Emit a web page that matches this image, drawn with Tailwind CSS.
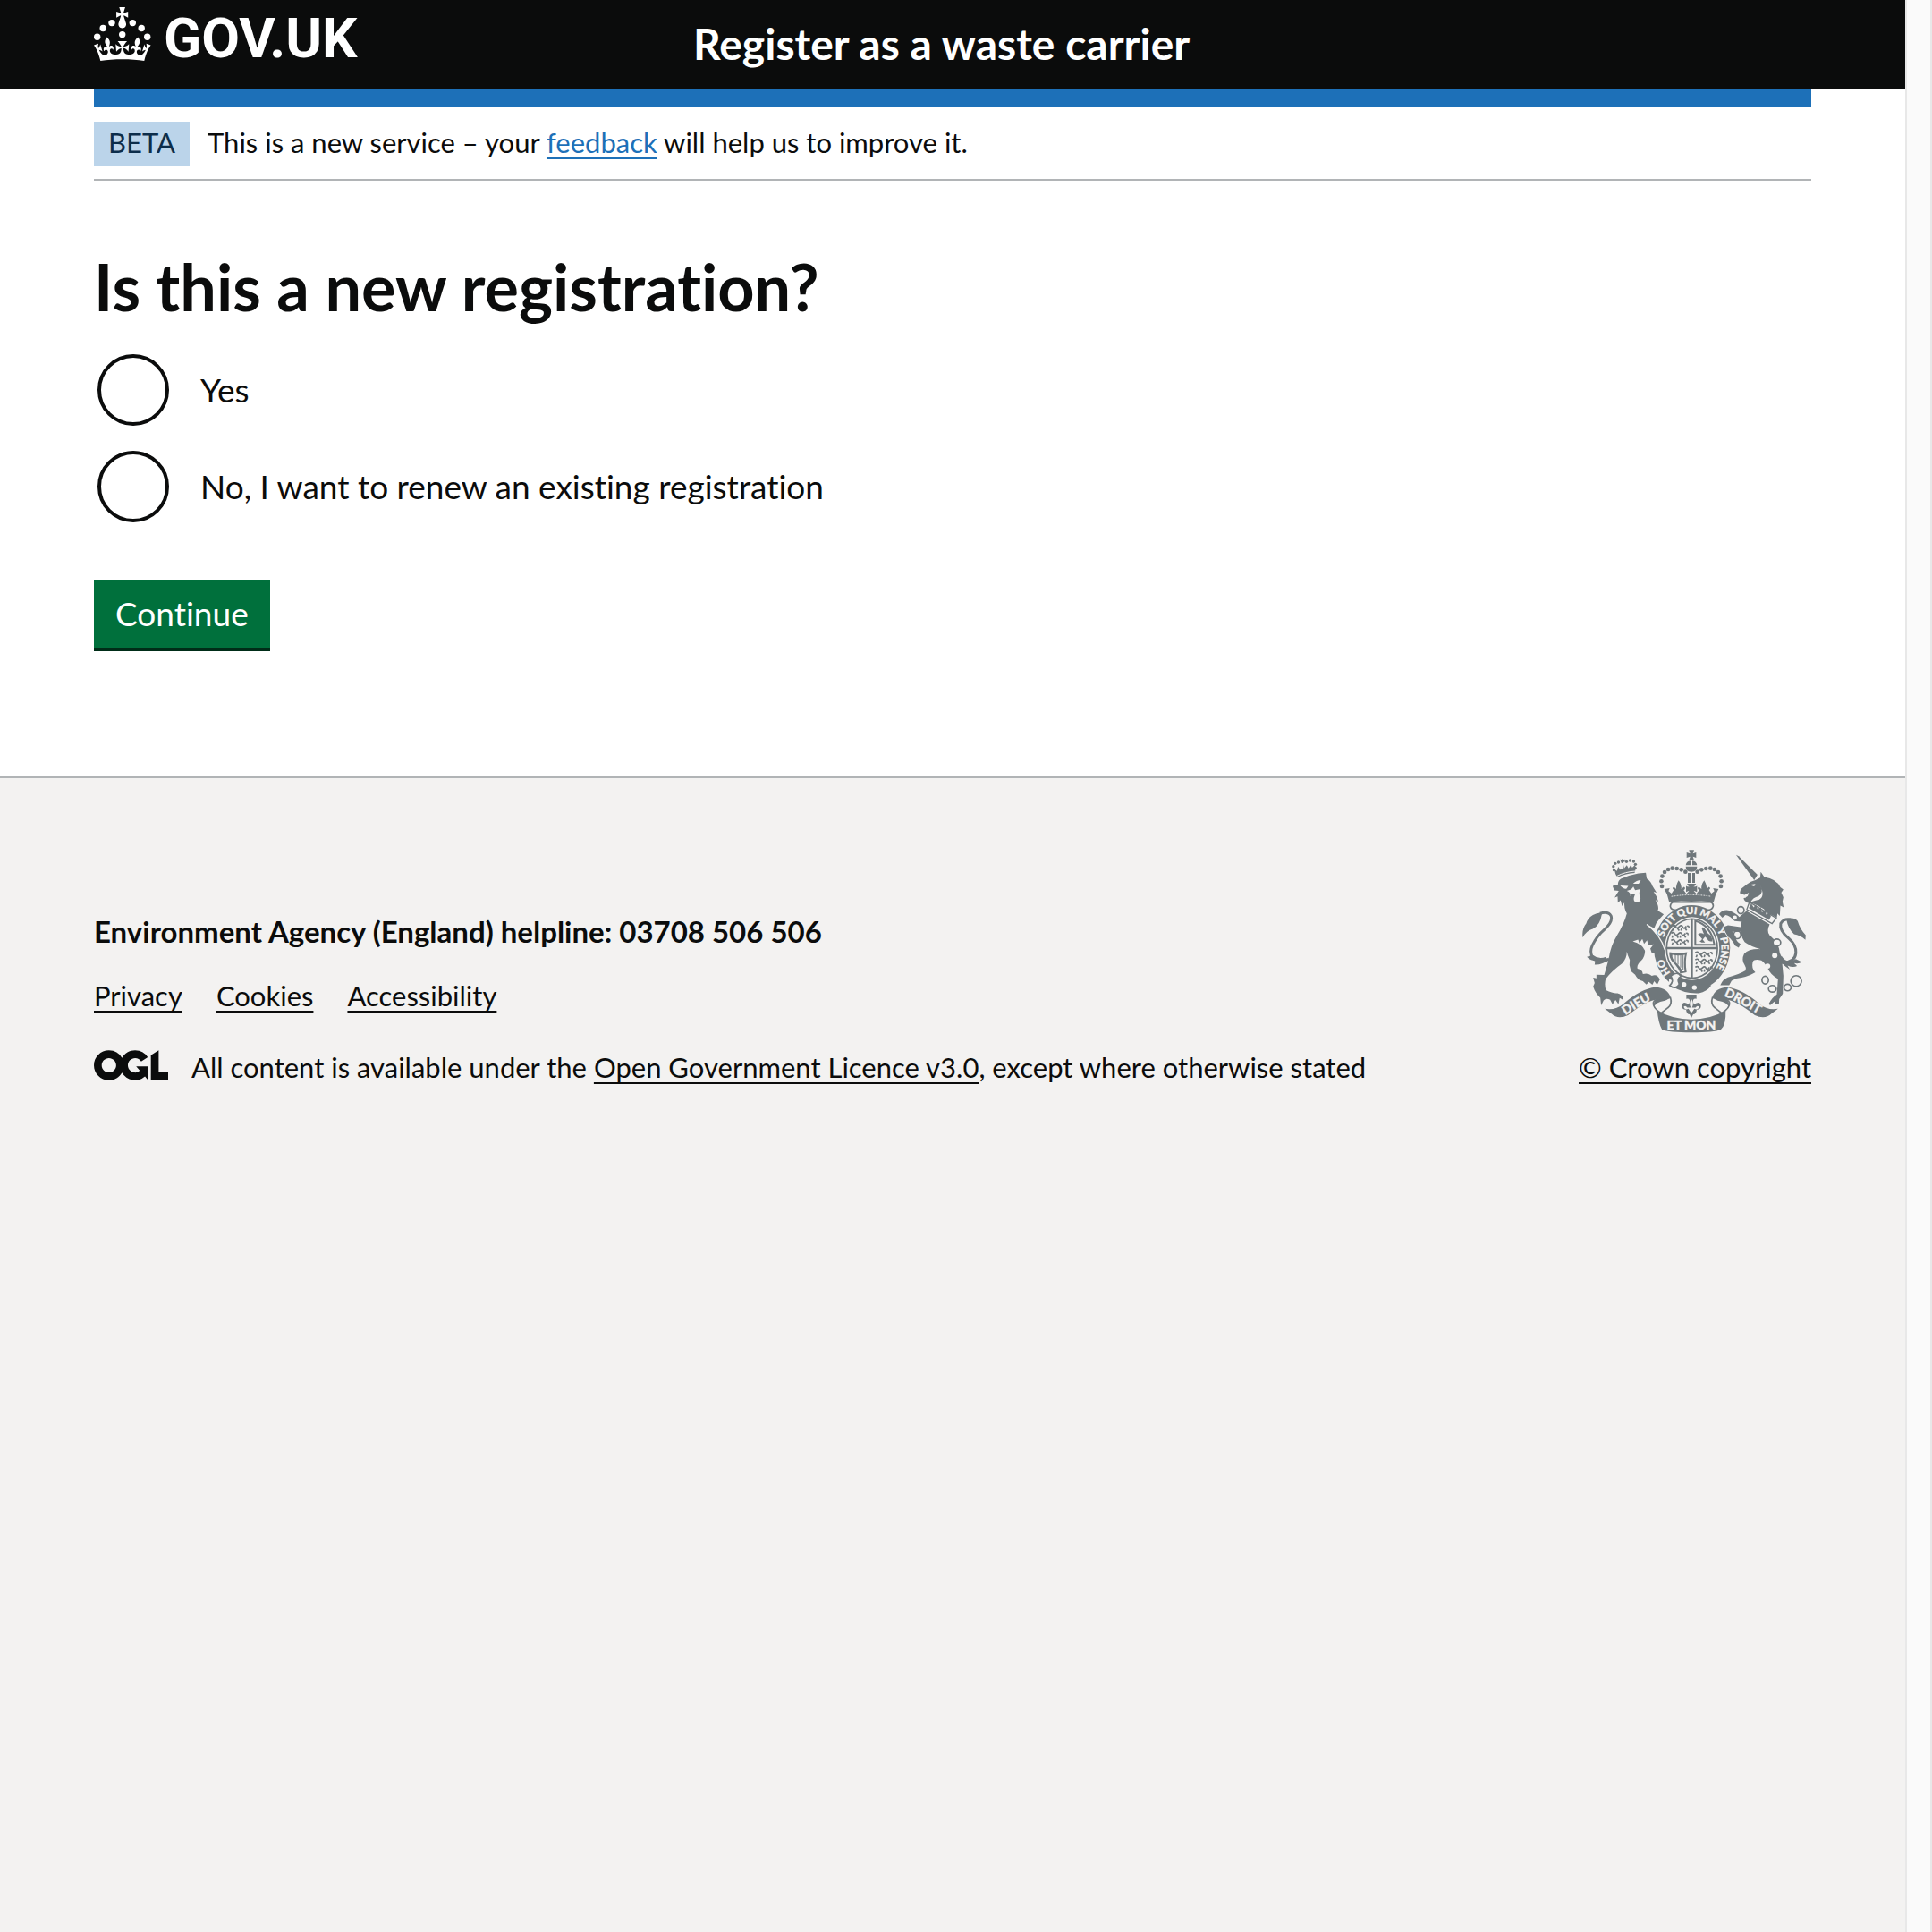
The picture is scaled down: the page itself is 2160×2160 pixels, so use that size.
<!DOCTYPE html>
<html lang="en">
<head>
<meta charset="utf-8">
<title>Is this a new registration? - Register as a waste carrier - GOV.UK</title>
<script src="https://cdn.jsdelivr.net/npm/@tailwindcss/browser@4"></script>
</head>
<body class="flex min-h-screen bg-white font-['Lato','Open_Sans',sans-serif] text-[31px] leading-[40px] text-[#0b0c0c] [font-variant-ligatures:none]">
<div class="flex min-w-0 flex-1 flex-col">
  <header class="bg-[#0b0c0c] text-white">
    <div class="mx-auto flex h-[100px] max-w-[1920px]">
      <a href="#" class="flex w-1/3 items-start gap-[14px] pt-2" aria-label="GOV.UK">
        <svg class="h-[60px] w-16 shrink-0" viewBox="0 0 64 60" fill="currentColor" aria-hidden="true">
          <circle cx="20" cy="17.6" r="3.7"/><circle cx="10.2" cy="23.5" r="3.7"/><circle cx="3.7" cy="33.2" r="3.7"/><circle cx="31.7" cy="30.6" r="3.7"/><circle cx="43.3" cy="17.6" r="3.7"/><circle cx="53.2" cy="23.5" r="3.7"/><circle cx="59.7" cy="33.2" r="3.7"/>
          <path d="M33.1,9.8c.2-.1.3-.3.5-.5l4.6,2.4v-6.8l-4.6,1.5c-.1-.2-.3-.3-.5-.5l1.9-5.9h-6.7l1.9,5.9c-.2.1-.3.3-.5.5l-4.6-1.5v6.8l4.6-2.4c.1.2.3.3.5.5l-2.6,8c-.9,2.8,1.2,5.7,4.1,5.7h0c3,0,5.1-2.9,4.1-5.7l-2.6-8ZM37,37.9s-3.4,3.8-4.1,6.1c2.2,0,4.2-.5,6.4-2.8l-.7,8.5c-2-2.8-4.4-4.1-5.7-3.8.1,3.1.5,6.7,5.8,7.2,3.7.3,6.7-1.5,7-3.8.4-2.6-2-4.3-3.7-1.6-1.4-4.5,2.4-6.1,4.9-3.2-1.9-4.5-1.8-7.7,2.4-10.9,3,4,2.6,7.3-1.2,11.1,2.4-1.3,6.2,0,4,4.6-1.2-2.8-3.7-2.2-4.2.2-.3,1.7.7,3.7,3,4.2,1.9.3,4.7-.9,7-5.9-1.3,0-2.4.7-3.9,1.7l2.4-8c.6,2.3,1.4,3.7,2.2,4.5.6-1.6.5-2.8,0-5.3l5,1.8c-2.6,3.6-5.2,8.7-7.3,17.5-7.4-1.1-15.7-1.7-24.5-1.7h0c-8.8,0-17.1.6-24.5,1.7-2.1-8.9-4.7-13.9-7.3-17.5l5-1.8c-.5,2.5-.6,3.7,0,5.3.8-.8,1.6-2.3,2.2-4.5l2.4,8c-1.5-1-2.6-1.7-3.9-1.7,2.3,5,5.2,6.2,7,5.9,2.3-.4,3.3-2.4,3-4.2-.5-2.4-3-3.1-4.2-.2-2.2-4.6,1.6-6,4-4.6-3.7-3.7-4.2-7.1-1.2-11.1,4.2,3.2,4.3,6.4,2.4,10.9,2.5-2.8,6.3-1.3,4.9,3.2-1.8-2.7-4.1-1-3.7,1.6.3,2.3,3.3,4.1,7,3.8,5.4-.5,5.7-4.2,5.8-7.2-1.3-.2-3.7,1-5.7,3.8l-.7-8.5c2.2,2.3,4.2,2.7,6.4,2.8-.7-2.3-4.1-6.1-4.1-6.1h10.6,0Z"/>
        </svg>
        <span class="font-['Roboto',sans-serif] text-[62px] leading-[70px] font-bold">GOV.UK</span>
      </a>
      <a href="#" class="pt-[19px] pl-[30px] text-5xl leading-[60px] font-bold">Register as a waste carrier</a>
    </div>
  </header>

  <div class="mx-auto w-full max-w-[1920px]">
    <div class="h-5 bg-[#1d70b8]"></div>
    <div class="flex border-b-2 border-[#b1b4b6] pt-4 pb-[14px]">
      <strong class="h-[50px] bg-[#bbd4ea] px-4 leading-[46px] font-normal text-[#0c2d4a]">BETA</strong>
      <p class="pl-5 leading-[46px]">This is a new service – your <a href="#" class="text-[#1d70b8] underline decoration-2 underline-offset-[5px] [text-decoration-skip-ink:none]">feedback</a> will help us to improve it.</p>
    </div>

    <main class="pt-[78px] pb-[140px]">
      <form onsubmit="return false">
        <fieldset>
          <legend><h1 class="text-7xl leading-[80px] font-bold">Is this a new registration?</h1></legend>
          <div class="flex flex-col gap-7 pt-9 pl-1 text-[37px]">
            <div class="flex items-center gap-[35px]">
              <input type="radio" id="new-yes" name="new-registration" class="size-20 appearance-none rounded-full border-4 border-[#0b0c0c] checked:bg-[radial-gradient(circle,#0b0c0c_20px,transparent_21px)]">
              <label for="new-yes">Yes</label>
            </div>
            <div class="flex items-center gap-[35px]">
              <input type="radio" id="new-no" name="new-registration" class="size-20 appearance-none rounded-full border-4 border-[#0b0c0c] checked:bg-[radial-gradient(circle,#0b0c0c_20px,transparent_21px)]">
              <label for="new-no">No, I want to renew an existing registration</label>
            </div>
          </div>
        </fieldset>
        <button type="submit" class="mt-16 block h-20 border-b-4 border-[#002d18] bg-[#00703c] px-6 text-[37px] text-white">Continue</button>
      </form>
    </main>
  </div>

  <footer class="flex-1 border-t-2 border-[#b1b4b6] bg-[#f3f2f1]">
    <div class="mx-auto flex max-w-[1920px] items-end justify-between pt-20">
      <div>
        <h2 class="text-[33px] font-bold">Environment Agency (England) helpline: 03708 506 506</h2>
        <ul class="flex gap-[38px] pt-8">
          <li><a href="#" class="underline decoration-2 underline-offset-[5px] [text-decoration-skip-ink:none]">Privacy</a></li>
          <li><a href="#" class="underline decoration-2 underline-offset-[5px] [text-decoration-skip-ink:none]">Cookies</a></li>
          <li><a href="#" class="underline decoration-2 underline-offset-[5px] [text-decoration-skip-ink:none]">Accessibility</a></li>
        </ul>
        <div class="flex items-start gap-[26px] pt-10">
          <svg class="mt-px h-[34px] w-[83px]" viewBox="0 0 483.2 195.7" fill="currentColor" role="img" aria-label="Open Government Licence">
            <path d="M421.5 142.8V.1l-50.7 32.3v161.1h112.4v-50.7zm-122.3-9.6A47.12 47.12 0 0 1 221 97.8c0-26 21.1-47.1 47.1-47.1 16.7 0 31.4 8.7 39.7 21.8l42.7-27.2A97.63 97.63 0 0 0 268.1 0c-36.5 0-68.3 20.1-85.1 49.7A98 98 0 0 0 97.8 0C43.9 0 0 43.9 0 97.8s43.9 97.8 97.8 97.8c36.5 0 68.3-20.1 85.1-49.7a97.76 97.76 0 0 0 149.6 25.4l19.4 22.2h3v-87.8h-80l24.3 27.5zM97.8 145c-26 0-47.1-21.1-47.1-47.1s21.1-47.1 47.1-47.1 47.1 21.1 47.1 47.1S123.8 145 97.8 145"/>
          </svg>
          <p>All content is available under the <a href="#" class="underline decoration-2 underline-offset-[5px] [text-decoration-skip-ink:none]">Open Government Licence v3.0</a>, except where otherwise stated</p>
        </div>
      </div>
      <a href="#" class="flex flex-col items-center gap-[18px] underline decoration-2 underline-offset-[5px] [text-decoration-skip-ink:none]">
        <svg class="h-[205px] w-[252px]" viewBox="87 58 756 616" fill="#6f777b" aria-hidden="true">
          <defs>
            <path id="garter" d="M356 388A99 114 0 0 1 554 388A99 114 0 0 1 455 502"/>
            <path id="garter-left" d="M388 478A98 113 0 0 1 356 400"/>
            <path id="ribbon-left" d="M232 614Q277 582 336 555"/>
            <path id="ribbon-right" d="M562 549Q620 573 690 618"/>
            <g id="lions" fill="none" stroke="#6f777b" stroke-width="5"><path d="M0 3q8-6 12 2t12 0 12 1 12-3M6 10l-3 8M18 10l6 8M32 10l-2 8M44 10l5 7M50 3q8-3 6 6"/></g>
            <g id="half-crown">
              <circle cx="354" cy="181" r="7"/><circle cx="352" cy="164" r="7"/><circle cx="355" cy="147" r="7"/><circle cx="363" cy="133" r="7"/><circle cx="375" cy="124" r="7"/><circle cx="389" cy="120" r="7"/><circle cx="404" cy="121" r="7"/><circle cx="419" cy="125" r="7"/><circle cx="433" cy="132" r="7"/>
              <path d="M362 190l18-3-4 10 10 8 8-12q-8-5 0-10l8 7q-2-12 8-29 11 15 9 29l9-7q8 5-1 11l9 12 9-9-8-3 4-12 16 6v44q-38-3-79 0-4-24-16-42z"/>
            </g>
            <g id="curl"><path d="M382 553q8 24-8 36-12 10-23 18-28-18-26-35 3-13 28-11" fill="#f3f2f1" stroke="#6f777b" stroke-width="5"/><path d="M327 588q6-18 34-22 15-3 18-18l-24-18-23 34q-8 8-5 24z"/></g>
          </defs>
          <!-- garter, shield and belt -->
          <ellipse cx="455" cy="388" rx="128" ry="143"/>
          <ellipse cx="455" cy="390" rx="92" ry="106" fill="#f3f2f1"/>
          <path d="M367 390a88 102 0 0 1 176 0a88 102 0 0 1-176 0zm5 0a83 97 0 0 0 166 0a83 97 0 0 0-166 0z" fill-rule="evenodd"/>
          <path d="M451 290h7v95h82v7h-82v100h-7V392h-84v-7h84z"/>
          <use href="#lions" x="388" y="312"/><use href="#lions" x="385" y="336"/><use href="#lions" x="385" y="360"/>
          <use href="#lions" x="466" y="401"/><use href="#lions" x="466" y="425"/><use href="#lions" x="466" y="450"/>
          <path d="M466 297q53 15 64 80h-64z" fill="none" stroke="#6f777b" stroke-width="6"/>
          <path d="M475 362q8 8 14-4l-14-16q10-8 20 0l-8-22q8-4 14 8l8 12q14 8 14 26-14 2-16-8l-8-8-8 10 8 10h-12z"/>
          <path d="M379 402q30 6 60 0-8 30-2 68l-22 4q-2-16-26-40-12-14-10-32zm10 9q-2 12 10 24 20 20 24 32 8 0 7-2-4-30 1-54-22 4-42 0z" fill-rule="evenodd"/>
          <path d="M399 410v24M408 410v34M417 410v44M425 410v52" fill="none" stroke="#6f777b" stroke-width="3"/>
          <path d="M378 492q76 36 170 18l-24 36q-80 10-146-28z" fill="#f3f2f1"/>
          <path d="M398 487q50 24 122 26-14 22-42 27-46 3-92-24z"/>
          <path d="M384 482q22-18 34 2-16 6-6 26-12 20-32 4 16-14 4-32z" fill="#f3f2f1" stroke="#6f777b" stroke-width="5"/>
          <circle cx="428" cy="511" r="8" fill="#f3f2f1"/><circle cx="463" cy="521" r="8" fill="#f3f2f1"/>
          <g fill="#f3f2f1" stroke="#f3f2f1" font-family="Lato, sans-serif" font-weight="900" font-size="34">
            <text><textPath href="#garter" startOffset="36">SOIT QUI MAL Y PENSE</textPath></text>
            <text><textPath href="#garter-left" startOffset="8">HO</textPath></text>
          </g>
          <!-- crown -->
          <path d="M392 234h124q12 4 10 14-4 14-18 12-56-26-106 0-18 2-20-12 0-10 10-14z" fill="#f3f2f1" stroke="#6f777b" stroke-width="5"/>
          <use href="#half-crown"/><use href="#half-crown" transform="matrix(-1 0 0 1 906 0)"/>
          <path d="M376 210h154l-8 24q-70-12-138 0z"/>
          <path d="M445 59h17l-4 12 11-4v18l-11-4 4 12h-17l4-12-12 4V67l12 4z"/>
          <path d="M434 110q2-13 16-15v15zM456 95q14 2 16 15h-16zM434 114h38q0 18-19 18t-19-18z"/>
          <path d="M441 136h9v33h-9zM456 136h9v33h-9zM438 172h31l-9 13 12-5v20l-14-5v12h-10v-12l-13 5v-20l11 5z"/>
          <path d="M386 215q68-11 134 0" fill="none" stroke="#f3f2f1" stroke-width="3" stroke-dasharray="5 4"/>
          <!-- lion -->
          <path d="M177 425Q150 440 127 427 108 407 120 380 134 349 162 325 190 300 183 280 174 264 146 272" fill="none" stroke="#6f777b" stroke-width="9"/>
          <path d="M160 268Q110 270 100 305 84 325 88 353 98 332 122 324 146 312 152 275zM122 412l-20 6q10 14 28 12l-2 14q22 2 44-14l-6-12q-24 10-44-6z"/>
          <path d="M188 180L206 176Q206 162 216 156 245 143 275 138L300 135 303 155Q318 165 322 180L336 202 326 199Q338 215 342 232L332 227Q346 250 340 262L360 275 345 292Q332 305 328 322L302 308Q334 335 347 362 352 380 362 395 368 410 358 418L350 408 340 415 334 403 320 406 315 390 326 376 308 379 304 362 294 374 288 358 278 372 274 360 256 366Q288 375 297 397 298 415 285 430 268 445 272 458 288 460 290 476 308 470 320 482 338 474 347 494L338 512 328 500 322 512 310 502 302 511 290 500Q272 496 264 478L250 466 245 446 246 428Q238 412 236 400 236 425 220 440 185 465 165 492 160 512 166 530 190 542 205 540 226 546 223 562L212 556 208 577 198 563 188 577 180 562Q166 556 158 564L150 581 147 555Q130 540 123 518L128 506 123 488 134 490 134 478 160 479Q170 445 175 425 182 380 202 348 228 305 236 272 226 255 228 235L220 247 215 228 206 236 205 215 195 219 209 196 194 195Z"/>
          <path d="M214 178l27 2-6 9q-10 2-21-11zM257 172q12-12 26-12l-7 12zM236 196q16-2 22-14l6 12 18-4q-8 16 0 30 0 14-12 15-14-2-10-17l4-11-10-1-6 8q2-12-12-18z" fill="#f3f2f1"/>
          <path d="M303 309Q350 345 364 395" fill="none" stroke="#f3f2f1" stroke-width="4"/>
          <g><circle cx="193" cy="126" r="5"/><circle cx="191" cy="114" r="5"/><circle cx="197" cy="104" r="5"/><circle cx="208" cy="100" r="5"/><circle cx="235" cy="98" r="5"/><circle cx="247" cy="94" r="5"/><circle cx="259" cy="97" r="5"/><circle cx="265" cy="107" r="5"/><circle cx="264" cy="119" r="5"/><path d="M213 90l6 2 2-4 4 4 6-2-2 8-6 2 4 20 9-10 6 10 8-12 4 10 10-10 1 18-3 10q-28 2-58 15l-6-12-4-16 9 6 4-14 7 10 8-3 2-18-6-2z"/><path d="M202 147q28-15 64-17" fill="none" stroke="#f3f2f1" stroke-width="3"/></g>
          <!-- unicorn -->
          <path d="M603 75L612 80 675 142 664 160Z"/>
          <path d="M617 206Q614 196 622 188L640 174Q652 164 668 160L684 152 686 132 698 150Q738 156 752 184L762 192 755 202 762 218 759 232 763 252 752 246 750 280 742 272 740 287Q730 280 712 272 700 256 662 240 634 240 628 222L642 214 646 202 632 210Z"/>
          <path d="M648 176l20-3-4 8zM684 178q14 24-6 36-18 4-26 20 20-8 28-8 22-12 4-48zM630 213l10-6-6 14z" fill="#f3f2f1"/>
          <path d="M648 234L738 288 724 306 639 259Z" fill="#f3f2f1" stroke="#6f777b" stroke-width="4"/>
          <path d="M646 254l8-16 8 14 8-10 6 18 10-10 4 18 12-10 2 18 12-6 4 12-6 12z"/>
          <path stroke="#f3f2f1" stroke-width="5" paint-order="stroke" d="M638 264L716 309Q704 332 716 346 748 372 750 405 760 425 758 440L762 482 760 542 748 560 747 578 736 576 732 568 718 580 712 577Q724 554 740 544L744 492Q720 480 710 458 700 438 688 430 664 424 659 435 654 458 668 470 640 487 604 491L588 498 580 513H550Q558 494 575 487 612 478 635 464 638 454 632 446 620 428 630 408 646 390 686 392 650 382 632 368 620 352 620 334L590 334 602 350Q602 366 618 374L612 387 600 380Q590 360 576 350L568 336 560 318 576 312 618 318 622 300 598 298Q584 280 568 277L557 286 546 274Q558 258 580 262 602 270 614 284Z"/>
          <path d="M753 437Q800 440 804 405 806 378 780 356 748 330 753 306 762 288 786 292" fill="none" stroke="#6f777b" stroke-width="9"/>
          <path d="M772 292Q796 282 810 298 818 326 837 345L836 361Q818 344 798 342 778 325 772 292zM746 425q14 20 38 36l-8-14q18 8 32 2l-10-10q16 4 26-4l-20-10q-30 20-48-10z"/>
          <g fill="none" stroke="#6f777b" stroke-width="5"><ellipse cx="619" cy="261" rx="11" ry="12"/><ellipse cx="607" cy="344" rx="12" ry="13"/><ellipse cx="740" cy="370" rx="13" ry="12" fill="#f3f2f1"/><ellipse cx="701" cy="496" rx="11" ry="13"/><ellipse cx="725" cy="525" rx="13" ry="11"/><ellipse cx="776" cy="521" rx="12" ry="11"/><circle cx="805" cy="499" r="18"/></g>
          <circle cx="733" cy="413" r="9" fill="#f3f2f1"/><circle cx="709" cy="449" r="9" fill="#f3f2f1"/><circle cx="599" cy="286" r="7" fill="#f3f2f1"/>
          <!-- motto ribbon and pendant -->
          <path d="M436 545h34v14q-8-2-11 4-1 12 4 14 20-12 22 6 0 12-14 12-2 16-12 16l-6 12-6-12q-10 0-12-16-14 0-14-12 2-18 22-6 5-2 4-14-3-6-11-4z"/>
          <path d="M453 560q10 12 2 28l12 0q6-8 12-2-4 12-16 6l-8 12h-4l-8-12q-12 6-16-6 6-6 12 2h12q-8-16 2-28z" fill="#f3f2f1"/>
          <use href="#curl"/><use href="#curl" transform="matrix(-1 0 0 1 906 0)"/>
          <path d="M162 592Q198 598 224 576 285 524 332 520 374 522 384 556L360 566Q340 556 318 566 288 576 240 614 206 630 184 609Z"/>
          <path d="M744 592Q708 598 682 576 621 524 574 520 532 522 522 556L546 566Q566 556 588 566 618 576 666 614 700 630 722 609Z"/>
          <path d="M338 598Q390 628 453 628T568 598Q570 646 552 662 530 672 453 672T354 662Q342 640 338 598Z"/>
          <g fill="#f3f2f1" stroke="#f3f2f1" font-family="Lato, sans-serif" font-weight="900" font-size="42">
            <text><textPath href="#ribbon-left">DIEU</textPath></text>
            <text><textPath href="#ribbon-right">DROIT</textPath></text>
            <text x="453" y="662" text-anchor="middle">ET MON</text>
          </g>
        </svg>
        <span>© Crown copyright</span>
      </a>
    </div>
  </footer>
</div>
<div class="w-[30px] shrink-0 border-x-2 border-[#e8e8e8] bg-[#fafafa]" aria-hidden="true"></div>
</body>
</html>
